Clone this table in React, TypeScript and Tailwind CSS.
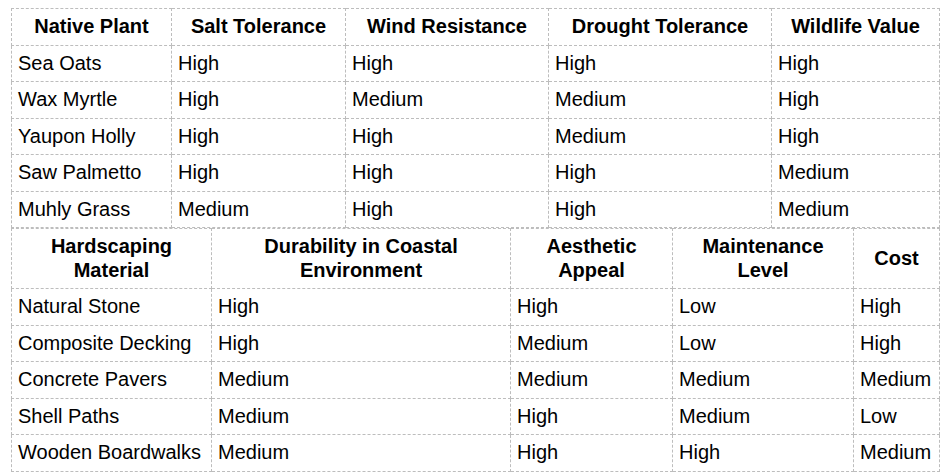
const plants = [
  ["Sea Oats", "High", "High", "High", "High"],
  ["Wax Myrtle", "High", "Medium", "Medium", "High"],
  ["Yaupon Holly", "High", "High", "Medium", "High"],
  ["Saw Palmetto", "High", "High", "High", "Medium"],
  ["Muhly Grass", "Medium", "High", "High", "Medium"],
];

const materials = [
  ["Natural Stone", "High", "High", "Low", "High"],
  ["Composite Decking", "High", "Medium", "Low", "High"],
  ["Concrete Pavers", "Medium", "Medium", "Medium", "Medium"],
  ["Shell Paths", "Medium", "High", "Medium", "Low"],
  ["Wooden Boardwalks", "Medium", "High", "High", "Medium"],
];

const cell = "border border-dashed border-[#bdbdbd] px-1.5 py-1.5";

function DataTable({
  headers,
  widths,
  rows,
}: {
  headers: string[];
  widths: number[];
  rows: string[][];
}) {
  return (
    <table className="w-[928px] table-fixed border-collapse">
      <colgroup>
        {widths.map((w, i) => (
          <col key={i} style={{ width: w }} />
        ))}
      </colgroup>
      <thead>
        <tr>
          {headers.map((h) => (
            <th key={h} className={`${cell} text-center font-bold`}>
              {h}
            </th>
          ))}
        </tr>
      </thead>
      <tbody>
        {rows.map((r) => (
          <tr key={r[0]}>
            {r.map((v, i) => (
              <td key={i} className={`${cell} text-left`}>
                {v}
              </td>
            ))}
          </tr>
        ))}
      </tbody>
    </table>
  );
}

export default function App() {
  return (
    <div className="min-h-screen bg-white pl-[11px] pt-2 font-['Liberation_Sans',Arial,sans-serif] text-[20px] leading-[23.5px] text-black">
      <DataTable
        headers={["Native Plant", "Salt Tolerance", "Wind Resistance", "Drought Tolerance", "Wildlife Value"]}
        widths={[160, 174, 203, 223, 168]}
        rows={plants}
      />
      <DataTable
        headers={["Hardscaping Material", "Durability in Coastal Environment", "Aesthetic Appeal", "Maintenance Level", "Cost"]}
        widths={[200, 299, 162, 181, 86]}
        rows={materials}
      />
    </div>
  );
}
